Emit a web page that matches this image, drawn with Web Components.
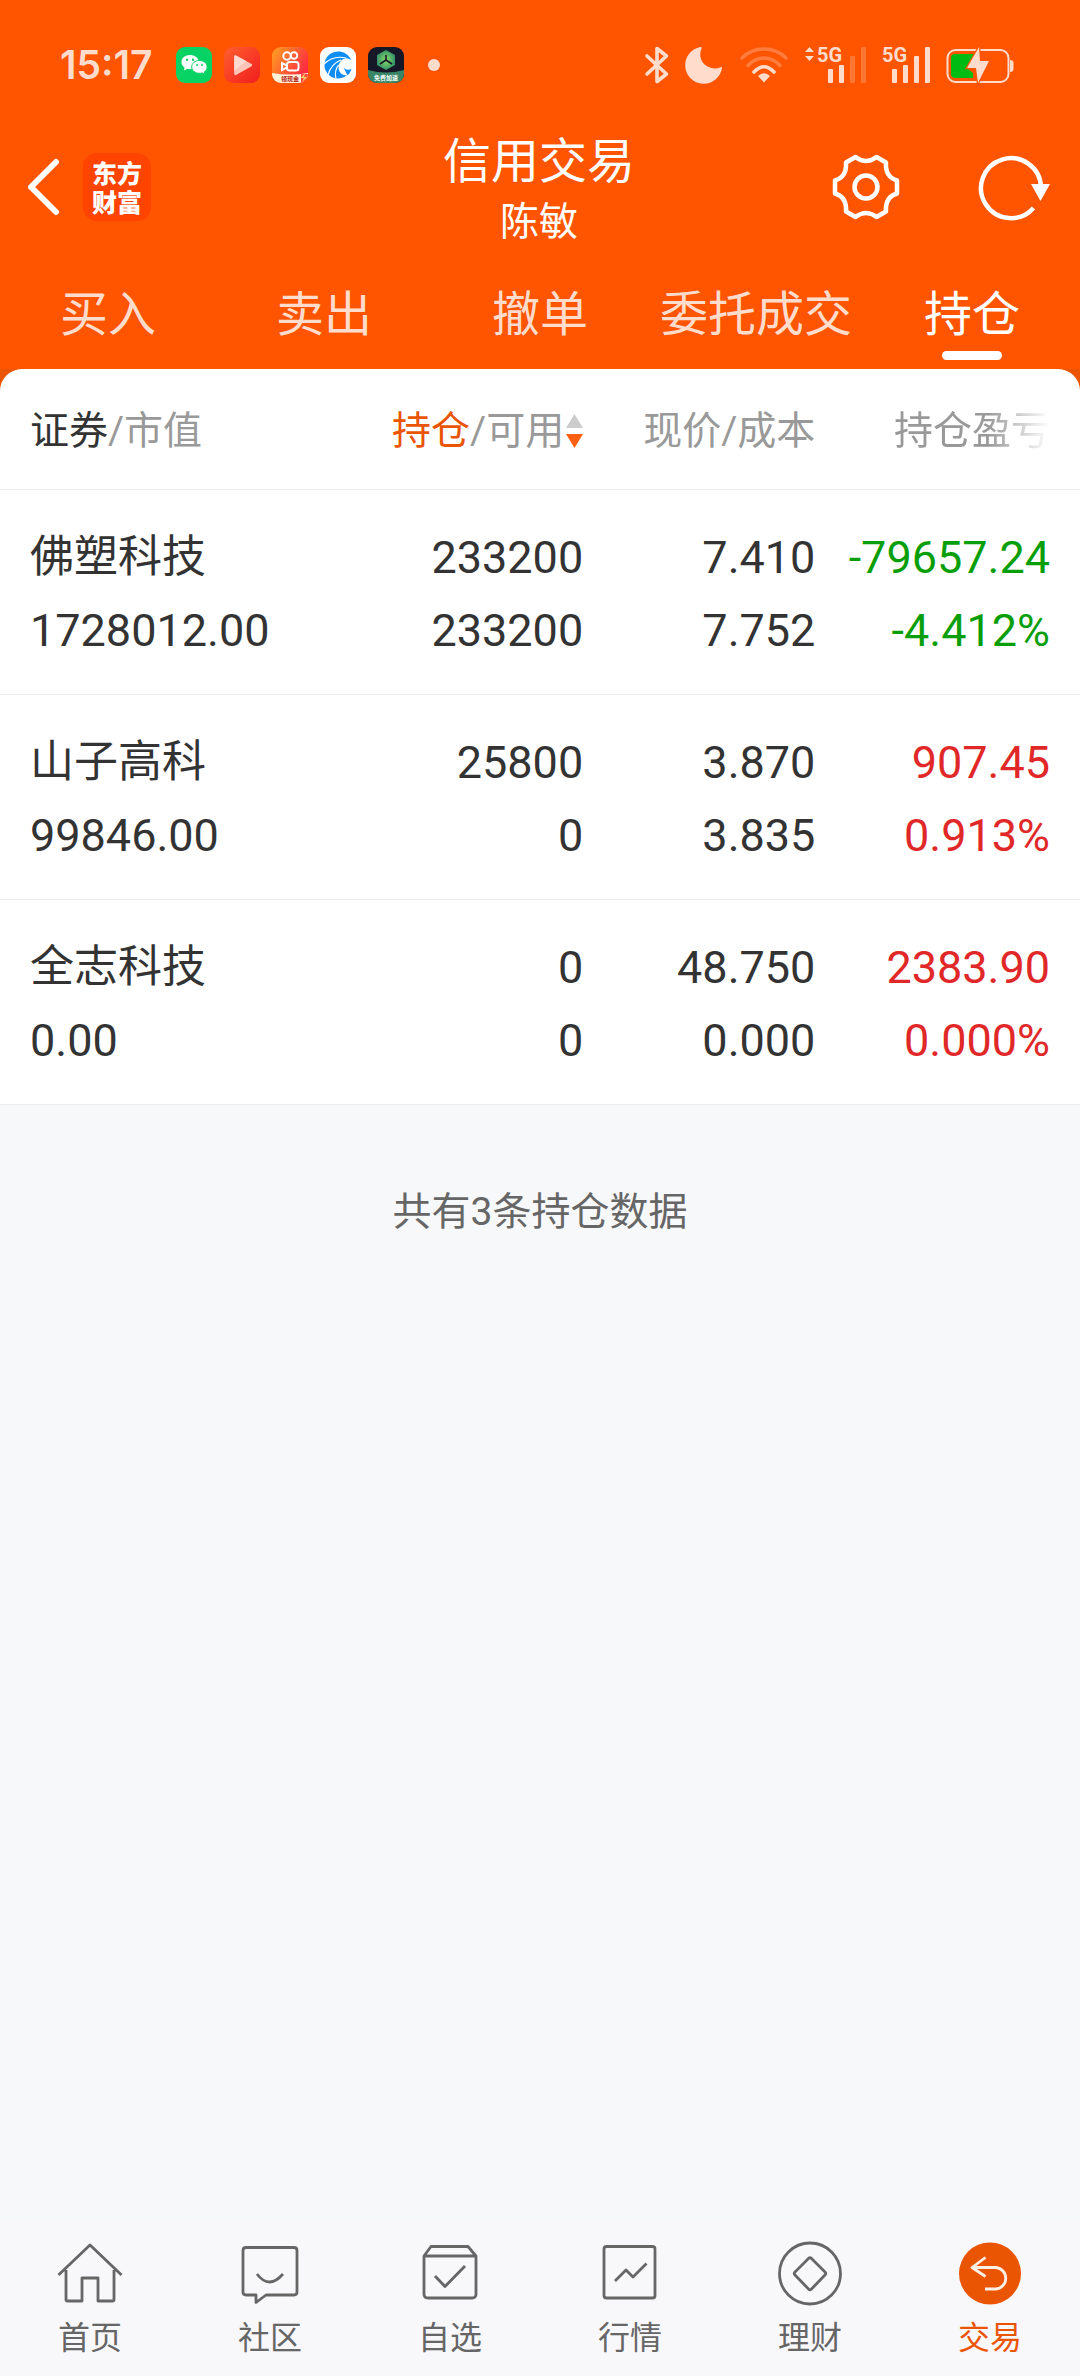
<!DOCTYPE html>
<html lang="zh-CN">
<head>
<meta charset="UTF-8">
<meta name="viewport" content="width=device-width, initial-scale=1">
<title>信用交易 - 持仓</title>
<style>
  :root {
    --brand: #ff5500;
    --accent: #ea5504;
    --text: #333;
    --text-mid: #666;
    --text-weak: #999;
    --up: #e12828;
    --down: #0a9f0a;
    --line: #ebebeb;
    --page-bg: #f7f8fa;
  }

  body {
    margin: 0;
    min-height: 100vh;
    display: flex;
    flex-direction: column;
    background: var(--page-bg);
    color: var(--text);
    font-family: Roboto, "Noto Sans CJK SC", sans-serif;
  }

  main {
    flex: 1;
  }
</style>
</head>
<body>
  <status-bar time="15:17"></status-bar>
  <trade-header>
    信用交易
    <span slot="account">陈敏</span>
  </trade-header>
  <tab-strip>
    <tab-item href="#buy">买入</tab-item>
    <tab-item href="#sell">卖出</tab-item>
    <tab-item href="#cancel">撤单</tab-item>
    <tab-item href="#orders">委托成交</tab-item>
    <tab-item href="#positions" active>持仓</tab-item>
  </tab-strip>
  <main>
    <holdings-table></holdings-table>
  </main>
  <bottom-nav>
    <nav-item href="#home" icon="home">首页</nav-item>
    <nav-item href="#community" icon="community">社区</nav-item>
    <nav-item href="#watchlist" icon="watchlist">自选</nav-item>
    <nav-item href="#quotes" icon="quotes">行情</nav-item>
    <nav-item href="#wealth" icon="wealth">理财</nav-item>
    <nav-item href="#trade" icon="trade" active>交易</nav-item>
  </bottom-nav>

<script>
/**
 * Phone status bar: clock, app notifications, radio and battery state
 */
class StatusBar extends HTMLElement {
  constructor() {
    super();
    this.attachShadow({ mode: 'open' });
  }

  connectedCallback() {
    this.shadowRoot.innerHTML = `
      <style>
        :host {
          display: flex;
          justify-content: space-between;
          align-items: center;
          height: 124px;
          padding: 6px 66px 0 60px;
          box-sizing: border-box;
          background: var(--brand);
          color: #ffdccc;
        }
        .group { display: flex; align-items: center; }
        .apps { gap: 12px; }
        .system { gap: 16px; }
        time {
          font: 600 39px/48px Inter, sans-serif;
          margin-right: 12px;
        }
        svg { display: block; overflow: visible; }
        .dot {
          width: 12px;
          height: 12px;
          margin-left: 12px;
          border-radius: 50%;
          background: currentColor;
        }
        .net { font: 700 20px Roboto, sans-serif; }
      </style>

      <div class="group apps">
        <time>${this.getAttribute('time')}</time>

        <svg width="36" height="36" viewBox="0 0 36 36" role="img" aria-label="微信">
          <rect width="36" height="36" rx="9" fill="#07d365"/>
          <path d="M14 8C9 8 5.500 11 5.500 15c0 2.300 1.200 4.200 3 5.500L8 23.500l3.300-1.700c.9.2 1.800.4 2.700.4 5 0 8.700-3.200 8.700-7.200S19 8 14 8z" fill="#fff"/>
          <path d="M23.500 13.500c-4.400 0-7.800 2.800-7.800 6.400s3.400 6.400 7.800 6.400c1 0 1.900-.1 2.700-.4l2.800 1.500-.6-2.600c1.700-1.200 2.700-2.900 2.700-4.900 0-3.600-3.200-6.400-7.600-6.400z" fill="#fff" stroke="#07d365"/>
          <g fill="#07d365"><circle cx="11" cy="12.800" r="1.200"/><circle cx="17" cy="12.800" r="1.200"/><circle cx="21" cy="18" r="1"/><circle cx="26" cy="18" r="1"/></g>
        </svg>

        <svg width="36" height="36" viewBox="0 0 36 36" role="img" aria-label="视频">
          <defs><linearGradient id="v" x1="0" y1="0" x2="1" y2="1"><stop offset="0" stop-color="#ff5f30"/><stop offset="1" stop-color="#f01d1d"/></linearGradient></defs>
          <rect width="36" height="36" rx="9" fill="url(#v)"/>
          <path d="M12 8.500 27.500 17q1.800 1 0 2.200L12 28q-1.800.6-1.800-1.400V9.700Q10.200 7.700 12 8.500z" fill="#ffc4b8"/>
          <path d="M10.200 10v14l12-10L12 8.500q-1.800-.8-1.800 1.500z" fill="#ffe0da" opacity=".8"/>
        </svg>

        <svg width="36" height="36" viewBox="0 0 36 36" role="img" aria-label="快手">
          <defs>
            <linearGradient id="k" x1="0" y1="0" x2="1" y2=".6"><stop offset="0" stop-color="#ffa320"/><stop offset="1" stop-color="#ff2743"/></linearGradient>
            <clipPath id="kc"><rect width="36" height="36" rx="9"/></clipPath>
          </defs>
          <g clip-path="url(#kc)">
            <rect width="36" height="36" fill="url(#k)"/>
            <g fill="none" stroke="#fff" stroke-width="2">
              <circle cx="15" cy="9" r="3.700"/><circle cx="22" cy="8.500" r="3.300"/>
              <rect x="15" y="15" width="11.500" height="8.500" rx="2.500"/>
              <path d="M15 18.500 10 16v7L15 20.500"/>
            </g>
            <path d="M0 26Q18 29 36 26V36H0z" fill="#fff1d8"/>
            <path d="M29 27h7v9h-7z" fill="#ff4a3d"/>
            <path d="m33 26-4 5h3l-2 4 5-5h-3z" fill="#ffd76a"/>
            <text x="9" y="34" font-family="Noto Sans CJK SC" font-size="6" font-weight="700" fill="#b52216">领现金</text>
          </g>
        </svg>

        <svg width="36" height="36" viewBox="0 0 36 36" role="img" aria-label="浏览器">
          <rect width="36" height="36" rx="9" fill="#fff"/>
          <path d="M31 12.500C28 7 23.500 4.500 18 4.500a13.500 13.500 0 1 0 9 23.500c-5 1-8.500-3-8.500-8s5-9.500 9-8.500c2 .4 3 1.500 3.500 1z" fill="#118ef5"/>
          <path d="M27.500 28.500a14 14 0 0 0 4-6.500q-5 2-8-1.500z" fill="#118ef5"/>
          <g fill="none" stroke="#fff" stroke-width="1.200">
            <path d="M26 11Q13 8 4 17"/><path d="M21 13Q11 17 8 28"/><path d="M18.500 18Q14 24 16 32"/>
          </g>
        </svg>

        <svg width="36" height="36" viewBox="0 0 36 36" role="img" aria-label="加速器">
          <defs>
            <clipPath id="ac"><rect width="36" height="36" rx="9"/></clipPath>
            <radialGradient id="ag"><stop offset="0" stop-color="#8ddd67"/><stop offset="1" stop-color="#349366"/></radialGradient>
          </defs>
          <g clip-path="url(#ac)">
            <rect width="36" height="36" fill="#171827"/>
            <path d="M18 3 27 8v10l-9 5-9-5V8z" fill="url(#ag)"/>
            <path d="M18 8v5l-6 4m6-4 6 4" fill="none" stroke="#171827" stroke-width="1.600"/>
            <path d="M0 23Q18 28 36 23V36H0z" fill="#398767"/>
            <text x="6" y="33" font-family="Noto Sans CJK SC" font-size="6" font-weight="700" fill="#fff">免费加速</text>
          </g>
        </svg>

        <span class="dot"></span>
      </div>

      <div class="group system">
        <svg width="24" height="38" viewBox="0 0 24 38" role="img" aria-label="蓝牙">
          <path d="M2 10 21.500 28 12 35.500V2.500L21.500 10 2 28" fill="none" stroke="currentColor" stroke-width="3.600" stroke-linecap="round" stroke-linejoin="round"/>
        </svg>
        <svg width="38" height="38" viewBox="0 0 38 38" role="img" aria-label="勿扰">
          <path d="M15.500 1A18.500 18.500 0 1 0 37 22c.2-1-.5-1.300-1.300-.8C25 26 11 16 16.500 2.500c.3-1-.1-1.700-1-1.500z" fill="currentColor"/>
        </svg>
        <svg width="50" height="38" viewBox="0 0 50 38" role="img" aria-label="WLAN">
          <g fill="none" stroke="currentColor" stroke-width="3.600" stroke-linecap="round">
            <path d="M3 12Q12 3 25 3t22 9M9 19.500Q16 12 25 12t16 7.500" opacity=".3"/>
            <path d="M15 26q10-10.500 20 0"/>
          </g>
          <path d="M19 30q6-5.500 12 0l-6 6.500z" fill="currentColor"/>
        </svg>
        <svg width="61" height="38" viewBox="0 0 61 38" role="img" aria-label="信号 1">
          <g fill="currentColor">
            <path d="M0 6 4.500 1 9 6zM0 10h9l-4.500 5z"/>
            <text class="net" x="12" y="16">5G</text>
            <rect x="23" y="23" width="5" height="14" rx="1"/><rect x="34" y="19" width="5" height="18" rx="1"/>
            <g opacity=".25"><rect x="45" y="10" width="5" height="27" rx="1"/><rect x="56" y="1" width="5" height="36" rx="1"/></g>
          </g>
        </svg>
        <svg width="48" height="38" viewBox="0 0 48 38" role="img" aria-label="信号 2">
          <g fill="currentColor">
            <text class="net" x="0" y="16">5G</text>
            <rect x="10" y="23" width="5" height="14" rx="1"/><rect x="21" y="19" width="5" height="18" rx="1"/>
            <rect x="32" y="10" width="5" height="27" rx="1"/><rect x="43" y="1" width="5" height="36" rx="1"/>
          </g>
        </svg>
        <svg width="68" height="38" viewBox="0 0 68 38" role="img" aria-label="充电中">
          <rect x="1.500" y="4" width="61" height="32" rx="8" fill="none" stroke="currentColor" stroke-width="2"/>
          <path d="M64 14q3.500 0 3.500 3v6q0 3-3.500 3z" fill="currentColor"/>
          <path d="M9 8H29L22 23l5 4v5H9q-4 0-4-4V12q0-4 4-4z" fill="#00bb12"/>
          <path d="M33 1 21 22h9l2 15 11-22h-9z" fill="currentColor" stroke="#f50" stroke-width="2.500" paint-order="stroke"/>
        </svg>
      </div>
    `;
  }
}

/**
 * Title bar with back link, brand mark and the page actions
 */
class TradeHeader extends HTMLElement {
  constructor() {
    super();
    this.attachShadow({ mode: 'open' });
  }

  connectedCallback() {
    this.shadowRoot.innerHTML = `
      <style>
        :host {
          display: block;
          background: var(--brand);
          color: #fff;
        }
        header {
          display: grid;
          grid-template-columns: 1fr auto 1fr;
          align-items: center;
          padding: 0 30px 0 28px;
        }
        .side { display: flex; align-items: center; }
        .left { gap: 22px; }
        .right { justify-content: flex-end; gap: 78px; }
        button, a {
          display: block;
          padding: 0;
          border: 0;
          background: none;
          color: inherit;
          text-decoration: none;
          cursor: pointer;
        }
        svg { display: block; }
        .brand {
          padding: 5px 9px;
          border-radius: 14px;
          background: #ff4400;
          font: 900 25px/29px "Noto Sans CJK SC", sans-serif;
        }
        .title { padding-top: 6px; text-align: center; }
        h1 {
          margin: 0;
          font-size: 48px;
          line-height: 64px;
          font-weight: 400;
        }
        p {
          margin: 0;
          font-size: 39px;
          line-height: 56px;
        }
      </style>

      <header>
        <div class="side left">
          <button aria-label="返回">
            <svg width="33" height="60" viewBox="0 0 33 60">
              <path d="M28 5 3 30 28 55" fill="none" stroke="#fff" stroke-width="6" stroke-linecap="round" stroke-linejoin="round"/>
            </svg>
          </button>
          <a class="brand" href="#home">东方<br>财富</a>
        </div>
        <div class="title">
          <h1><slot></slot></h1>
          <p><slot name="account"></slot></p>
        </div>
        <div class="side right">
          <button aria-label="设置">
            <svg width="68" height="68" viewBox="0 0 68 68">
              <g fill="none" stroke="#fff" stroke-width="4.500" stroke-linejoin="round">
                <path d="M23.500 4Q34 12 44.500 4L54 9.500Q53 24 65 27.500V40.500Q53 44 54 58.500L44.500 64Q34 56 23.500 64L14 58.500Q15 44 3 40.500V27.500Q15 24 14 9.500z"/>
                <circle cx="34" cy="34" r="11.500"/>
              </g>
            </svg>
          </button>
          <button aria-label="刷新">
            <svg width="72" height="68" viewBox="0 0 72 68">
              <path d="M55.500 55A30 30 0 1 1 63 34" fill="none" stroke="#fff" stroke-width="4.500"/>
              <path d="M53 31H72L62.500 48z" fill="#fff"/>
            </svg>
          </button>
        </div>
      </header>
    `;
  }
}

/**
 * Row of equally wide tabs
 */
class TabStrip extends HTMLElement {
  constructor() {
    super();
    this.attachShadow({ mode: 'open' });
  }

  connectedCallback() {
    this.shadowRoot.innerHTML = `
      <style>
        :host { display: block; background: var(--brand); }
        nav { display: flex; padding: 33px 0 9px; }
        ::slotted(*) { flex: 1; }
      </style>
      <nav aria-label="交易功能"><slot></slot></nav>
    `;
  }
}

class TabItem extends HTMLElement {
  constructor() {
    super();
    this.attachShadow({ mode: 'open' });
  }

  connectedCallback() {
    this.shadowRoot.innerHTML = `
      <style>
        :host { display: block; }
        a {
          display: flex;
          flex-direction: column;
          align-items: center;
          gap: 4px;
          color: #ffdccc;
          font-size: 48px;
          line-height: 64px;
          white-space: nowrap;
          text-decoration: none;
        }
        a::after {
          content: "";
          width: 60px;
          height: 9px;
          border-radius: 5px;
        }
        :host([active]) a { color: #fff; }
        :host([active]) a::after { background: #fff; }
      </style>
      <a href="${this.getAttribute('href')}"><slot></slot></a>
    `;
  }
}

const HOLDINGS = [
  { name: '佛塑科技', value: '1728012.00', held: '233200', usable: '233200', price: '7.410', cost: '7.752', profit: '-79657.24', rate: '-4.412%' },
  { name: '山子高科', value: '99846.00', held: '25800', usable: '0', price: '3.870', cost: '3.835', profit: '907.45', rate: '0.913%' },
  { name: '全志科技', value: '0.00', held: '0', usable: '0', price: '48.750', cost: '0.000', profit: '2383.90', rate: '0.000%' },
];

/**
 * Positions list: two lines per security, plus the count below
 */
class HoldingsTable extends HTMLElement {
  constructor() {
    super();
    this.attachShadow({ mode: 'open' });
  }

  connectedCallback() {
    this.render();
  }

  renderRow(item) {
    const trend = item.profit.startsWith('-') ? 'down' : 'up';
    return `
      <tr>
        <td><span class="name">${item.name}</span><span>${item.value}</span></td>
        <td><span>${item.held}</span><span>${item.usable}</span></td>
        <td><span>${item.price}</span><span>${item.cost}</span></td>
        <td class="${trend}"><span>${item.profit}</span><span>${item.rate}</span></td>
      </tr>
    `;
  }

  render() {
    this.shadowRoot.innerHTML = `
      <style>
        :host { display: block; }
        .corners { background: var(--accent); }
        .sheet {
          background: #fff;
          border-radius: 22px 22px 0 0;
        }
        table {
          width: 100%;
          border-collapse: separate;
          border-spacing: 0;
          table-layout: fixed;
        }
        .c1 { width: 30%; }
        .c2 { width: 24%; }
        .c3 { width: 21.5%; }
        th, td {
          border-bottom: 1px solid var(--line);
          text-align: right;
          font-weight: 400;
          white-space: nowrap;
        }
        th {
          height: 116px;
          padding: 4px 0 0;
          color: var(--text-weak);
          font-size: 39px;
          line-height: 56px;
        }
        td {
          padding: 31px 0 27px;
          font-size: 45px;
          line-height: 73px;
        }
        th:first-child, td:first-child { padding-left: 30px; text-align: left; }
        th:last-child, td:last-child { padding-right: 30px; }
        th b { color: var(--text); font-weight: 400; }
        button {
          display: inline-flex;
          align-items: center;
          gap: 2px;
          padding: 0;
          border: 0;
          background: none;
          color: inherit;
          font: inherit;
          cursor: pointer;
        }
        button b { color: var(--accent); }
        .fade {
          -webkit-mask-image: linear-gradient(to right, #000 60%, transparent);
          mask-image: linear-gradient(to right, #000 60%, transparent);
        }
        td span { display: block; }
        td .name { font-size: 44px; }
        .up { color: var(--up); }
        .down { color: var(--down); }
        .count {
          margin: 0;
          padding: 79px 30px;
          color: var(--text-mid);
          font-size: 39px;
          line-height: 56px;
          text-align: center;
        }
      </style>

      <div class="corners">
        <div class="sheet">
          <table>
            <colgroup><col class="c1"><col class="c2"><col class="c3"><col></colgroup>
            <thead>
              <tr>
                <th scope="col"><b>证券</b>/市值</th>
                <th scope="col" aria-sort="descending">
                  <button><span><b>持仓</b>/可用</span><svg width="17" height="36" viewBox="0 0 17 36"><path d="M0 15 8.500 1 17 15z" fill="#ccc"/><path d="M0 21H17L8.500 35z" fill="#ff5f12"/></svg></button>
                </th>
                <th scope="col">现价/成本</th>
                <th scope="col"><span class="fade">持仓盈亏</span></th>
              </tr>
            </thead>
            <tbody>${HOLDINGS.map((item) => this.renderRow(item)).join('')}</tbody>
          </table>
        </div>
      </div>
      <p class="count">共有${HOLDINGS.length}条持仓数据</p>
    `;
  }
}

/**
 * Bottom navigation
 */
class BottomNav extends HTMLElement {
  constructor() {
    super();
    this.attachShadow({ mode: 'open' });
  }

  connectedCallback() {
    this.shadowRoot.innerHTML = `
      <style>
        :host { display: block; background: #f8f8fb; }
        nav { display: flex; padding: 20px 0 18px; }
        ::slotted(*) { flex: 1; }
      </style>
      <nav aria-label="主导航"><slot></slot></nav>
    `;
  }
}

const NAV_ICONS = {
  home: '<path d="M1.500 35 33 5 64.500 35M9 30V59.500Q9 61 10.500 61H25V38H41V61H55.500Q57 61 57 59.500V30"/>',
  community: '<path d="M9 7.500H57Q60 7.500 60 10.500V52Q60 55 57 55H29L19 62.500V55H9Q6 55 6 52V10.500Q6 7.500 9 7.500z"/><path d="M20 34Q32 50 46 34"/>',
  watchlist: '<path d="M7 16H59V54Q59 58 55 58H11Q7 58 7 54V16L14 6.500H51L59 16"/><path d="M18 36 28 46.500 48 26"/>',
  quotes: '<rect x="7" y="6.500" width="51" height="51.500" rx="2.500"/><path d="M18 41 29 30 36 37 49.500 23.500"/>',
  wealth: '<circle cx="33" cy="33.500" r="30.500"/><path d="M31.500 18.500Q33 17 34.500 18.500L48 32Q49.500 33.500 48 35L34.500 49Q33 50.500 31.500 49L18 35Q16.500 33.500 18 32z"/>',
  trade: '<circle cx="33" cy="33.500" r="31" fill="#ea5504" stroke="none"/><path d="M28.500 17.500 15 27.500 28.500 36.500M15 27.500H39A10.800 10.800 0 0 1 39 49H28" stroke="#fff0e6"/>',
};

class NavItem extends HTMLElement {
  constructor() {
    super();
    this.attachShadow({ mode: 'open' });
  }

  connectedCallback() {
    this.shadowRoot.innerHTML = `
      <style>
        :host { display: block; }
        a {
          display: flex;
          flex-direction: column;
          align-items: center;
          gap: 12px;
          color: var(--text-mid);
          font-size: 32px;
          line-height: 40px;
          text-decoration: none;
        }
        :host([active]) a { color: var(--accent); }
        svg { display: block; }
      </style>
      <a href="${this.getAttribute('href')}">
        <svg width="66" height="66" viewBox="0 0 66 66" fill="none" stroke="currentColor" stroke-width="2.800" stroke-linejoin="round">${NAV_ICONS[this.getAttribute('icon')]}</svg>
        <span><slot></slot></span>
      </a>
    `;
  }
}

customElements.define('status-bar', StatusBar);
customElements.define('trade-header', TradeHeader);
customElements.define('tab-strip', TabStrip);
customElements.define('tab-item', TabItem);
customElements.define('holdings-table', HoldingsTable);
customElements.define('bottom-nav', BottomNav);
customElements.define('nav-item', NavItem);
</script>
</body>
</html>
